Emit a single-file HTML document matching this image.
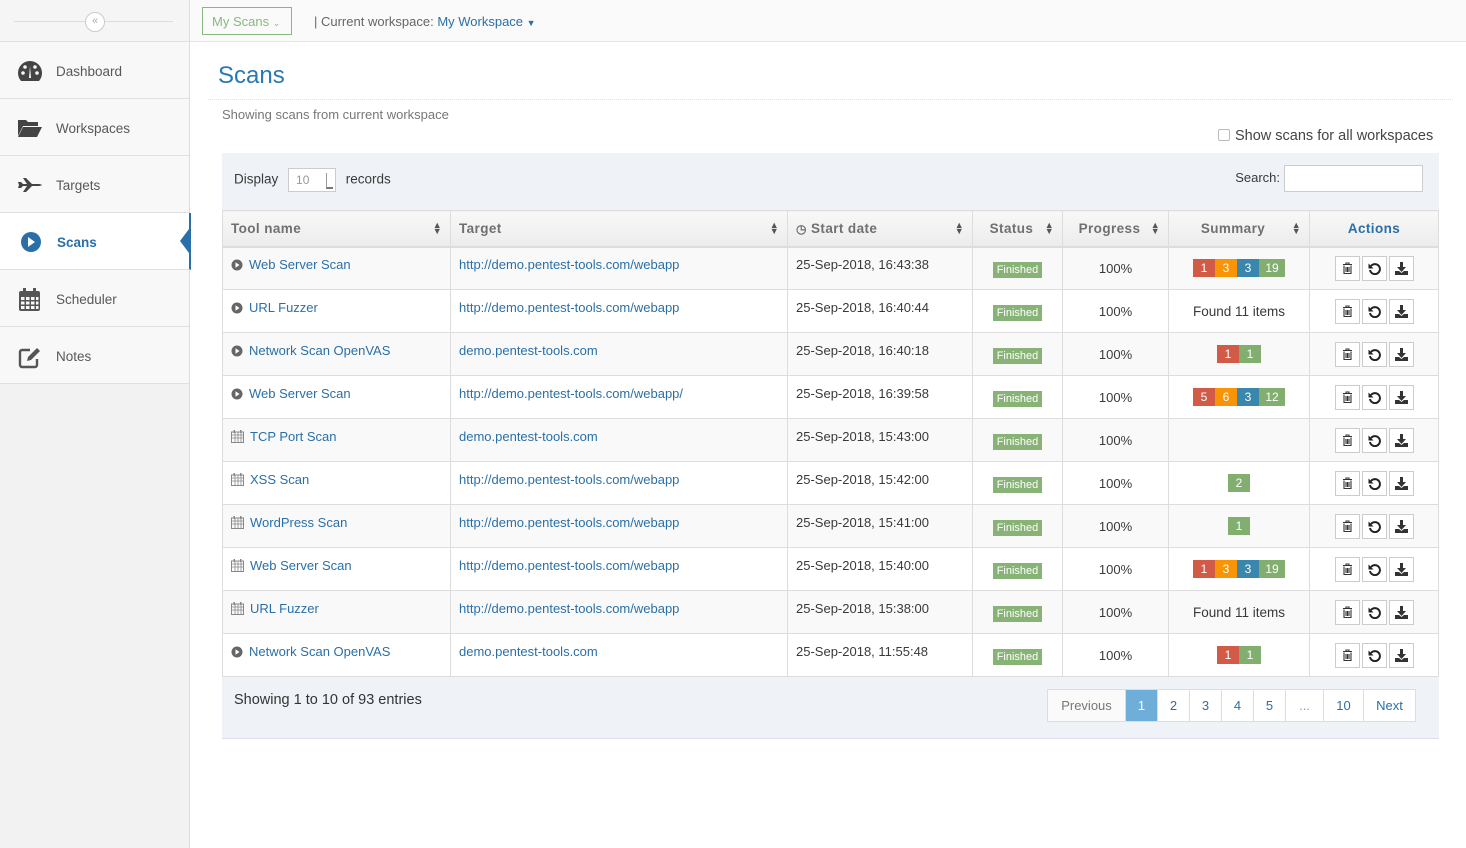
<!DOCTYPE html>
<html><head><meta charset="utf-8"><style>
*{box-sizing:border-box;margin:0;padding:0}
body{width:1466px;height:848px;font-family:"Liberation Sans",sans-serif;font-size:13px;color:#393939;background:#fff;position:relative;overflow:hidden}
a{color:#2a6fa8;text-decoration:none}
#side{position:absolute;left:0;top:0;width:190px;height:848px;background:#f2f2f2;border-right:1px solid #ddd}
#side .top{height:42px;border-bottom:1px solid #e0e0e0;position:relative;background:#f5f5f5}
#side .top .ln{position:absolute;left:14px;right:16px;top:21px;border-top:1px solid #ddd}
#side .top .c{position:absolute;left:85px;top:12px;width:20px;height:20px;border-radius:50%;border:1px solid #ccc;background:#fff;font-size:11px;color:#aaa;text-align:center;line-height:17px}
.nav{height:57px;border-bottom:1px solid #e0e0e0;background:#f8f8f8;position:relative;font-size:13.5px;color:#585858}
.nav span{position:absolute;left:56px;top:22px}
.nav svg{position:absolute;left:17px;top:18px}
.nav.act{background:#fff;color:#2a6fa8;font-weight:bold;border-right:2px solid #2a6fa8;width:191px}
.nav.act:after{content:"";position:absolute;right:0;top:16px;border:12px solid transparent;border-right:9px solid #2a6fa8;border-left:0}
#topbar{position:absolute;left:190px;top:0;right:0;height:42px;border-bottom:1px solid #e5e5e5;background:#fafafa}
.ms{position:absolute;left:12px;top:7px;width:90px;height:28px;border:1px solid #87b87f;color:#87b87f;font-size:13px;padding:6px 9px}
.ws{position:absolute;left:124px;top:14px;color:#666;font-size:13px}
h1{position:absolute;left:218px;top:62px;font-size:24px;font-weight:normal;color:#2679b5}
.hr{position:absolute;left:208px;top:99px;width:1245px;border-top:1px dotted #e2e2e2}
.sub{position:absolute;left:222px;top:107px;color:#777;font-size:13px}
.chk{position:absolute;left:1218px;top:128px;font-size:14.5px;color:#444}
.chk i{display:inline-block;width:12px;height:12px;border:1px solid #bbb;border-radius:2px;vertical-align:-1px;margin-right:5px;background:#fff}
#panel{position:absolute;left:222px;top:153px;width:1217px;height:586px;background:#eff3f8;border-bottom:1px solid #dde}
.disp{position:absolute;left:12px;top:15px;font-size:13.5px}
.sel{display:inline-block;width:48px;height:24px;border:1px solid #ccc;background:#fff;vertical-align:middle;margin:0 6px;color:#999;padding:4px 7px;font-size:12px;position:relative}
.sel:after{content:"";position:absolute;right:2px;top:4px;width:6px;height:14px;border-left:1px solid #999;border-bottom:2px solid #777}
.srch{position:absolute;right:16px;top:12px;font-size:13px}
.srch i{display:inline-block;width:139px;height:27px;border:1px solid #ccc;background:#fff;vertical-align:middle;margin-left:4px}
table{position:absolute;left:0;top:57px;border-collapse:collapse;width:1216px;table-layout:fixed}
th{height:36px;background:linear-gradient(#f8f8f8,#ececec);border:1px solid #ddd;border-bottom:2px solid #ddd;font-size:13.5px;color:#707070;text-align:left;padding:0 8px;position:relative;letter-spacing:.4px}
th .s{position:absolute;right:8px;top:11px;font-size:9px;line-height:6px;color:#555}
td{height:43px;border:1px solid #ddd;padding:0 8px;font-size:13px;background:#fff;vertical-align:middle}
td.t{padding-bottom:7px}
tr:nth-child(odd) td{background:#f9f9f9}
td.c{text-align:center}
.tl svg{vertical-align:-2px;margin-right:6px}
.fin{background:#82af6f;color:#fff;font-size:11px;padding:2px 4px;opacity:.95}
.b{display:inline-block;color:#fff;font-size:12px;padding:2px 0;width:22px;text-align:center}
.r{background:#d15b47}.o{background:#f89406}.bl{background:#3a87ad}.g{background:#82af6f}
.ac{display:inline-block;width:25px;height:25px;border:1px solid #ccc;background:#fff;margin:0 1px;vertical-align:middle;text-align:center;padding-top:5px}
.pg{position:absolute;right:23px;top:536px;display:flex;border:1px solid #ddd}
.pg span{height:31px;padding:8px 0;text-align:center;font-size:13px;color:#2a6fa8;background:#fff;border-left:1px solid #ddd}
.pg span:first-child{border-left:0;color:#777;background:#fafafa}
.info{position:absolute;left:12px;top:539px;font-size:14.5px;color:#333}
</style></head><body>
<div id="side">
 <div class="top"><div class="ln"></div><div class="c">«</div></div>
 <div class="nav"><svg width="26" height="22" viewBox="0 0 26 22"><path d="M13 1A12 12 0 0 0 1 13c0 3 1 5.5 3 8h18c2-2.5 3-5 3-8A12 12 0 0 0 13 1z" fill="#444"/><circle cx="6" cy="13" r="1.8" fill="#f8f8f8"/><circle cx="8" cy="7" r="1.8" fill="#f8f8f8"/><circle cx="18" cy="7" r="1.8" fill="#f8f8f8"/><circle cx="20" cy="13" r="1.8" fill="#f8f8f8"/><path d="M12 18l1-12 1 12z" fill="#f8f8f8"/></svg><span>Dashboard</span></div>
 <div class="nav"><svg width="26" height="22" viewBox="0 0 26 22"><path d="M1 3h8l2 2h10v4H6L1 19z" fill="#444"/><path d="M6 10h19l-5 10H1z" fill="#444"/></svg><span>Workspaces</span></div>
 <div class="nav"><svg width="26" height="22" viewBox="0 0 26 22"><path d="M1 8h3l2 2h4L6 4h3l6 6h6c3 0 4 1 4 1s-1 1-4 1h-6l-6 6H6l4-6H6l-2 2H1l1-3z" fill="#444"/></svg><span>Targets</span></div>
 <div class="nav act"><svg width="26" height="24" viewBox="0 0 26 24" style="left:19px;top:17px"><circle cx="12" cy="12" r="10" fill="#2a6fa8"/><path d="M9 7l7 5-7 5z" fill="#fff"/></svg><span style="left:57px">Scans</span></div>
 <div class="nav"><svg width="26" height="24" viewBox="0 0 26 24"><rect x="2" y="3" width="21" height="20" rx="2" fill="#555"/><g fill="#f8f8f8"><rect x="4" y="9" width="3.5" height="3"/><rect x="9" y="9" width="3.5" height="3"/><rect x="14" y="9" width="3.5" height="3"/><rect x="19" y="9" width="2.5" height="3"/><rect x="4" y="13.5" width="3.5" height="3"/><rect x="9" y="13.5" width="3.5" height="3"/><rect x="14" y="13.5" width="3.5" height="3"/><rect x="19" y="13.5" width="2.5" height="3"/><rect x="4" y="18" width="3.5" height="3"/><rect x="9" y="18" width="3.5" height="3"/><rect x="14" y="18" width="3.5" height="3"/><rect x="19" y="18" width="2.5" height="3"/></g><rect x="6" y="0" width="3" height="6" fill="#555"/><rect x="16" y="0" width="3" height="6" fill="#555"/></svg><span>Scheduler</span></div>
 <div class="nav"><svg width="26" height="24" viewBox="0 0 26 24"><path d="M13 5H5a2 2 0 0 0-2 2v13a2 2 0 0 0 2 2h13a2 2 0 0 0 2-2v-6" fill="none" stroke="#555" stroke-width="2.4"/><path d="M10 16l1-4 9-9 3 3-9 9z" fill="#555"/></svg><span>Notes</span></div>
</div>
<div id="topbar"><div class="ms">My Scans <span style="font-size:9px">&#8964;</span></div><div class="ws">| Current workspace: <a>My Workspace</a> <span style="color:#2a6fa8;font-size:9px">▼</span></div></div>
<h1>Scans</h1><div class="hr"></div>
<div class="sub">Showing scans from current workspace</div>
<div class="chk"><i></i>Show scans for all workspaces</div>
<div id="panel">
 <div class="disp">Display <span class="sel">10</span> records</div>
 <div class="srch">Search:<i></i></div>
 <table>
 <colgroup><col style="width:228px"><col style="width:337px"><col style="width:185px"><col style="width:90px"><col style="width:106px"><col style="width:141px"><col style="width:129px"></colgroup>
 <tr><th>Tool name<span class="s">▲<br>▼</span></th><th>Target<span class="s">▲<br>▼</span></th><th><span style="font-size:12px">&#9719;</span> Start date<span class="s">▲<br>▼</span></th><th style="text-align:center;padding-right:20px">Status<span class="s">▲<br>▼</span></th><th style="text-align:center;padding-right:20px">Progress<span class="s">▲<br>▼</span></th><th style="text-align:center;padding-right:20px">Summary<span class="s">▲<br>▼</span></th><th style="text-align:center;color:#2a6fa8">Actions</th></tr>
 <tbody id="tb"></tbody>
 </table>
 <div class="info">Showing 1 to 10 of 93 entries</div>
 <div class="pg"><span style="width:77px">Previous</span><span style="width:32px;background:#6faed9;color:#fff">1</span><span style="width:32px">2</span><span style="width:32px">3</span><span style="width:32px">4</span><span style="width:32px">5</span><span style="width:38px;color:#999">...</span><span style="width:40px">10</span><span style="width:52px">Next</span></div>
</div>
<script>
var P='<svg width="12" height="12" viewBox="0 0 12 12"><circle cx="6" cy="6" r="5.5" fill="#666"/><path d="M4.5 3.2l4 2.8-4 2.8z" fill="#fff"/></svg>';
var C='<svg width="13" height="13" viewBox="0 0 13 13"><rect x="0.5" y="2" width="12" height="10.5" fill="none" stroke="#888"/><path d="M0.5 5h12M4 2v10.5M7 2v10.5M10 2v10.5M0.5 8h12" stroke="#888" stroke-width=".8"/><rect x="2.5" y="0" width="1.5" height="3" fill="#888"/><rect x="9" y="0" width="1.5" height="3" fill="#888"/></svg>';
var U='http://demo.pentest-tools.com/webapp',D='demo.pentest-tools.com';
function b(a){return a.map(function(x){return '<span class="b '+x[0]+'"'+(x[1].length>1?' style="width:26px"':'')+'>'+x[1]+'</span>'}).join('')}
var s19=b([['r','1'],['o','3'],['bl','3'],['g','19']]);
var rows=[[P,'Web Server Scan',U,'16:43:38',s19],[P,'URL Fuzzer',U,'16:40:44','Found 11 items'],[P,'Network Scan OpenVAS',D,'16:40:18',b([['r','1'],['g','1']])],[P,'Web Server Scan',U+'/','16:39:58',b([['r','5'],['o','6'],['bl','3'],['g','12']])],[C,'TCP Port Scan',D,'15:43:00',''],[C,'XSS Scan',U,'15:42:00',b([['g','2']])],[C,'WordPress Scan',U,'15:41:00',b([['g','1']])],[C,'Web Server Scan',U,'15:40:00',s19],[C,'URL Fuzzer',U,'15:38:00','Found 11 items'],[P,'Network Scan OpenVAS',D,'11:55:48',b([['r','1'],['g','1']])]];
var A='<span class="ac"><svg width="11" height="12" viewBox="0 0 11 12"><path d="M1 2.5h9M4 2.5V1h3v1.5M2 3.5v8h7v-8M4 5v5M5.5 5v5M7 5v5" fill="none" stroke="#333" stroke-width="1.1"/></svg></span><span class="ac"><svg width="13" height="13" viewBox="0 0 13 13"><path d="M3 4A5 5 0 1 1 2 8" fill="none" stroke="#222" stroke-width="2"/><path d="M0.5 1.5v5h5z" fill="#222"/></svg></span><span class="ac"><svg width="13" height="13" viewBox="0 0 13 13"><path d="M5 0h3v5h3l-4.5 5L2 5h3z" fill="#333"/><path d="M0 9h4l2.5 2 2.5-2h4v4H0z" fill="#333"/></svg></span>';
var h='';rows.forEach(function(r){h+='<tr><td class="tl t">'+r[0]+'<a>'+r[1]+'</a></td><td class="t"><a>'+r[2]+'</a></td><td class="t">25-Sep-2018, '+r[3]+'</td><td class="c"><span class="fin">Finished</span></td><td class="c">100%</td><td class="c" style="font-size:13.5px">'+r[4]+'</td><td class="c">'+A+'</td></tr>'});
document.getElementById('tb').innerHTML=h;
</script>
</body></html>
